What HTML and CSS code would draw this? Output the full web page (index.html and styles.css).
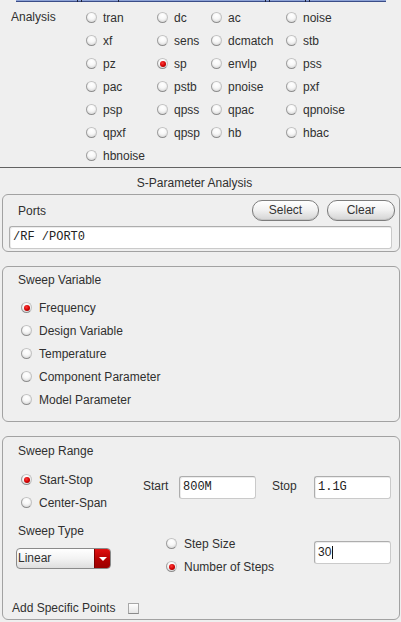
FILE: index.html
```html
<!DOCTYPE html>
<html>
<head>
<meta charset="utf-8">
<link rel="stylesheet" href="styles.css">
</head>
<body>
<div class="tabstrip">
  <span class="seg w61"></span><span class="seg w3"></span><span class="seg w36"></span><span class="seg w146"></span><span class="seg w3"></span><span class="seg w35"></span><span class="seg w3"></span><span class="seg w76 last"></span>
</div>

<section class="analysis">
  <div class="alabel">Analysis</div>
  <div class="agrid">
    <label class="radio"><span class="dot"></span>tran</label>
    <label class="radio"><span class="dot"></span>dc</label>
    <label class="radio"><span class="dot"></span>ac</label>
    <label class="radio"><span class="dot"></span>noise</label>
    <label class="radio"><span class="dot"></span>xf</label>
    <label class="radio"><span class="dot"></span>sens</label>
    <label class="radio"><span class="dot"></span>dcmatch</label>
    <label class="radio"><span class="dot"></span>stb</label>
    <label class="radio"><span class="dot"></span>pz</label>
    <label class="radio"><span class="dot on"></span>sp</label>
    <label class="radio"><span class="dot"></span>envlp</label>
    <label class="radio"><span class="dot"></span>pss</label>
    <label class="radio"><span class="dot"></span>pac</label>
    <label class="radio"><span class="dot"></span>pstb</label>
    <label class="radio"><span class="dot"></span>pnoise</label>
    <label class="radio"><span class="dot"></span>pxf</label>
    <label class="radio"><span class="dot"></span>psp</label>
    <label class="radio"><span class="dot"></span>qpss</label>
    <label class="radio"><span class="dot"></span>qpac</label>
    <label class="radio"><span class="dot"></span>qpnoise</label>
    <label class="radio"><span class="dot"></span>qpxf</label>
    <label class="radio"><span class="dot"></span>qpsp</label>
    <label class="radio"><span class="dot"></span>hb</label>
    <label class="radio"><span class="dot"></span>hbac</label>
    <label class="radio"><span class="dot"></span>hbnoise</label>
  </div>
</section>

<div class="divider"></div>
<div class="title">S-Parameter Analysis</div>

<div class="group ports">
  <div class="ports-head">
    <span class="glabel">Ports</span>
    <div class="btns">
      <span class="btn sel">Select</span>
      <span class="btn clr">Clear</span>
    </div>
  </div>
  <div class="field wide">/RF /PORT0</div>
</div>

<div class="group sweepvar">
  <div class="ghead">Sweep Variable</div>
  <div class="vlist">
    <label class="radio"><span class="dot on"></span>Frequency</label>
    <label class="radio"><span class="dot"></span>Design Variable</label>
    <label class="radio"><span class="dot"></span>Temperature</label>
    <label class="radio"><span class="dot"></span>Component Parameter</label>
    <label class="radio"><span class="dot"></span>Model Parameter</label>
  </div>
</div>

<div class="group range">
  <div class="ghead">Sweep Range</div>
  <div class="rowa">
    <div class="rcol">
      <label class="radio"><span class="dot on"></span>Start-Stop</label>
      <label class="radio"><span class="dot"></span>Center-Span</label>
    </div>
    <div class="pair">
      <span class="plabel start">Start</span>
      <div class="field short">800M</div>
      <span class="plabel stop">Stop</span>
      <div class="field short">1.1G</div>
    </div>
  </div>
  <div class="rowb">
    <div class="tcol">
      <div class="tlabel">Sweep Type</div>
      <div class="combo">
        <span class="ctext">Linear</span>
        <span class="carrow"><span class="tri"></span></span>
      </div>
    </div>
    <div class="scol">
      <label class="radio"><span class="dot"></span>Step Size</label>
      <label class="radio"><span class="dot on"></span>Number of Steps</label>
    </div>
    <div class="ncol">
      <div class="field short sans">30<span class="caret"></span></div>
    </div>
  </div>
  <div class="addrow">
    <span>Add Specific Points</span>
    <span class="check"></span>
  </div>
</div>
</body>
</html>
```

FILE: styles.css
```css
html, body {
  margin: 0;
  padding: 0;
}
body {
  width: 401px;
  height: 622px;
  overflow: hidden;
  background: #efefef;
  font-family: "Liberation Sans", Arial, sans-serif;
  font-size: 12px;
  color: #303030;
}

/* top strip */
.tabstrip {
  display: flex;
  height: 2px;
  margin-left: 16px;
}
.seg {
  height: 2px;
  background: linear-gradient(#8da2d6 50%, #3b4d88 50%);
  border-right: 1px solid #1e2238;
}
.seg.last { border-right: none; }
.w61 { width: 61px; }
.w3 { width: 3px; }
.w36 { width: 36px; }
.w146 { width: 146px; }
.w35 { width: 35px; }
.w76 { width: 76px; }

/* analysis */
.analysis {
  display: flex;
  padding-top: 4px;
}
.alabel {
  width: 75px;
  padding-left: 11px;
  line-height: 23px;
  height: 23px;
}
.agrid {
  display: grid;
  grid-template-columns: 71px 54px 75px 100px;
  grid-auto-rows: 23px;
}

.radio {
  display: flex;
  align-items: center;
  gap: 6px;
  height: 23px;
  white-space: nowrap;
}
.dot {
  box-sizing: border-box;
  width: 11px;
  height: 11px;
  flex: none;
  border-radius: 50%;
  border: 1px solid #c2c2c2;
  border-bottom-color: #8e8e8e;
  border-left-color: #9e9e9e;
  background: radial-gradient(circle at 50% 30%, #ffffff 0%, #f7f7f7 45%, #d4d4d4 90%);
  display: grid;
  place-items: center;
}
.dot.on::after {
  content: "";
  width: 6px;
  height: 6px;
  border-radius: 50%;
  background: radial-gradient(circle at 40% 35%, #ff3a3a 0%, #d00000 55%, #7a0000 100%);
}

.divider {
  height: 1px;
  background: #626262;
}
.title {
  padding: 8px 12px 4px 0;
  line-height: 14px;
  text-align: center;
}

/* group boxes */
.group {
  margin: 0 1px 0 2px;
  border: 1px solid #a2a2a2;
  border-radius: 6px;
}
.ports {
  padding: 5px 7px 2px 6px;
}
.ports-head {
  display: flex;
  align-items: center;
  justify-content: space-between;
  height: 21px;
  margin-right: -3px;
}
.glabel {
  margin-left: 9px;
}
.btns {
  display: flex;
  gap: 8px;
}
.btn {
  box-sizing: border-box;
  height: 21px;
  line-height: 19px;
  text-align: center;
  border: 1px solid #7d7d7d;
  border-radius: 10px;
  background: linear-gradient(#ffffff, #f2f2f2 45%, #d4d4d4);
  box-shadow: inset 0 -1px 0 #c4c4c4;
  color: #333;
}
.sel { width: 67px; }
.clr { width: 68px; }

.field {
  box-sizing: border-box;
  height: 23px;
  line-height: 21px;
  background: #fff;
  border: 1px solid #cacaca;
  border-top-color: #adadad;
  border-left-color: #adadad;
  border-radius: 3px;
  box-shadow: inset 1px 1px 0 #ececec;
  font-family: "Liberation Mono", "DejaVu Sans Mono", monospace;
  font-size: 12px;
  color: #222;
  padding-left: 3px;
  white-space: nowrap;
}
.wide {
  margin-top: 5px;
}
.short {
  width: 77px;
}
.field.sans {
  font-family: "Liberation Sans", Arial, sans-serif;
  padding-left: 3px;
  display: flex;
  align-items: center;
}
.caret {
  display: inline-block;
  width: 1px;
  height: 13px;
  background: #111;
  margin-left: 1px;
}

.sweepvar {
  margin-top: 14px;
  padding: 6px 0 10px 0;
}
.ghead {
  line-height: 14px;
  margin-left: 15px;
}
.vlist {
  margin-top: 9px;
  margin-left: 18px;
}
.vlist .radio, .rcol .radio, .scol .radio {
  gap: 7px;
}

.range {
  margin-top: 14px;
  padding: 7px 0 1px 0;
}
.rowa {
  display: flex;
  margin-top: 10px;
}
.rcol {
  width: 122px;
  padding-left: 18px;
}
.pair {
  display: flex;
  align-items: center;
  height: 23px;
  margin-top: 8px;
}
.plabel {
  margin-bottom: 3px;
}
.start { width: 36px; }
.stop { width: 42px; margin-left: 16px; }

.rowb {
  display: flex;
  margin-top: 6px;
}
.tcol {
  width: 163px;
}
.tlabel {
  line-height: 22px;
  margin-left: 15px;
}
.combo {
  box-sizing: border-box;
  display: flex;
  width: 95px;
  height: 21px;
  margin-top: 6px;
  margin-left: 13px;
  border: 1px solid #8a8a8a;
  border-radius: 4px;
  overflow: hidden;
  background: linear-gradient(#ffffff, #f3f3f3 50%, #dedede);
}
.ctext {
  flex: 1;
  padding-left: 1px;
  line-height: 19px;
}
.carrow {
  width: 15px;
  border-left: 1px solid #7a0000;
  background: linear-gradient(#e01010, #b00000 60%, #990000);
  display: grid;
  place-items: center;
}
.tri {
  width: 0;
  height: 0;
  border-left: 4px solid transparent;
  border-right: 4px solid transparent;
  border-top: 4px solid #fff;
}
.scol {
  width: 148px;
  padding-top: 12px;
}
.ncol {
  padding-top: 21px;
}

.addrow {
  display: flex;
  align-items: center;
  gap: 13px;
  height: 20px;
  margin-top: 20px;
  margin-left: 9px;
}
.check {
  box-sizing: border-box;
  width: 11px;
  height: 11px;
  border: 1px solid #a8a8a8;
  border-bottom-color: #8a8a8a;
  background: linear-gradient(#ffffff, #e6e6e6);
}
```
